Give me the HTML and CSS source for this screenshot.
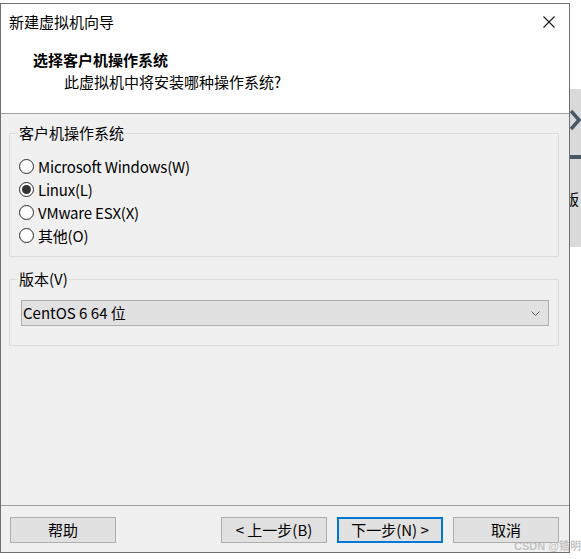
FILE: index.html
```html
<!DOCTYPE html>
<html lang="zh-CN">
<head>
<meta charset="utf-8">
<title>新建虚拟机向导</title>
<link rel="stylesheet" href="styles.css">
</head>
<body>
<div class="desktop">
  <div class="bgwin">
    <svg class="bg-arrow" width="12" height="24" viewBox="0 0 12 24"><polyline points="1,3 9,12 1,21" fill="none" stroke="#4a5866" stroke-width="3.5"/></svg>
    <div class="bg-bar"></div>
    <div class="bg-char">版</div>
  </div>

  <div class="dialog">
    <div class="titlebar">
      <span class="title">新建虚拟机向导</span>
      <svg class="close" width="12" height="12" viewBox="0 0 12 12"><path d="M0.5 0.5 L11.5 11.5 M11.5 0.5 L0.5 11.5" stroke="#1a1a1a" stroke-width="1.1" fill="none"/></svg>
    </div>
    <div class="header">
      <div class="heading">选择客户机操作系统</div>
      <div class="subheading">此虚拟机中将安装哪种操作系统?</div>
    </div>
    <div class="content">
      <fieldset class="group group-os">
        <legend>客户机操作系统</legend>
        <div class="radio-row"><span class="radio"></span><span>Microsoft Windows(W)</span></div>
        <div class="radio-row"><span class="radio checked"></span><span>Linux(L)</span></div>
        <div class="radio-row"><span class="radio"></span><span>VMware ESX(X)</span></div>
        <div class="radio-row"><span class="radio"></span><span>其他(O)</span></div>
      </fieldset>
      <fieldset class="group group-ver">
        <legend>版本(V)</legend>
        <div class="combo">
          <span>CentOS 6 64 位</span>
          <svg class="chev" width="9" height="5" viewBox="0 0 9 5"><polyline points="0.5,0.5 4.5,4.5 8.5,0.5" fill="none" stroke="#606060" stroke-width="1"/></svg>
        </div>
      </fieldset>
    </div>
    <div class="footer">
      <div class="btn">帮助</div>
      <div class="btn-group">
        <div class="btn">&lt; 上一步(B)</div>
        <div class="btn default">下一步(N) &gt;</div>
        <div class="btn">取消</div>
      </div>
    </div>
  </div>

  <div class="watermark">CSDN @锆明</div>
</div>
</body>
</html>
```

FILE: styles.css
```css
* { box-sizing: border-box; }
html, body {
  margin: 0;
  padding: 0;
  background: #ffffff;
}
body {
  font-family: "Noto Sans CJK SC", "Noto Sans", sans-serif;
  font-size: 15px;
  color: #000;
}
.desktop {
  position: relative;
  width: 581px;
  height: 559px;
  overflow: hidden;
  background: #ffffff;
}
.bgwin {
  position: absolute;
  left: 565px;
  top: 89px;
  width: 20px;
  height: 158px;
  background: #dadada;
}
.bg-arrow {
  position: absolute;
  left: 5px;
  top: 19px;
}
.bg-bar {
  position: absolute;
  left: 5px;
  top: 66px;
  width: 11px;
  height: 4px;
  background: #4a5866;
}
.bg-char {
  position: absolute;
  left: -1px;
  top: 100px;
  font-size: 15px;
  line-height: 20px;
}
.dialog {
  position: absolute;
  left: 0;
  top: 3px;
  width: 570px;
  height: 550px;
  border: 1px solid #707070;
  background: #f0f0f0;
  display: flex;
  flex-direction: column;
  z-index: 2;
}
.titlebar {
  height: 36px;
  background: #fff;
  display: flex;
  align-items: center;
  justify-content: space-between;
  padding: 0 14px 0 8px;
  line-height: 20px;
}
.header {
  height: 74px;
  background: #fff;
  border-bottom: 1px solid #a0a0a0;
  padding-top: 10px;
}
.heading {
  font-weight: bold;
  line-height: 20px;
  padding-left: 32px;
}
.subheading {
  line-height: 20px;
  margin-top: 2px;
  padding-left: 63px;
}
.content {
  flex: 1;
  padding: 9px 0 0 8px;
}
.group {
  margin: 0;
  width: 550px;
  border: 1px solid #dcdcdc;
  padding: 12px 8px 9px 8px;
  min-width: 0;
}
.group legend {
  padding: 0 1px;
  line-height: 20px;
}
.group-ver {
  margin-top: 12px;
  padding: 11px 8px 19px 8px;
}
.radio-row {
  display: flex;
  align-items: center;
  height: 23px;
  line-height: 20px;
  letter-spacing: -0.2px;
}
.radio {
  width: 15px;
  height: 15px;
  border: 1.3px solid #2b2b2b;
  border-radius: 50%;
  background: #fff;
  margin: 0 4px 0 1px;
  display: flex;
  align-items: center;
  justify-content: center;
  flex: none;
}
.radio.checked::after {
  content: "";
  width: 9px;
  height: 9px;
  border-radius: 50%;
  background: #333;
}
.combo {
  margin-left: 3px;
  width: 528px;
  height: 26px;
  background: #e1e1e1;
  border: 1px solid #adadad;
  display: flex;
  align-items: center;
  justify-content: space-between;
  padding: 0 8px 0 1px;
  line-height: 20px;
}
.footer {
  height: 47px;
  border-top: 1px solid #a0a0a0;
  display: flex;
  justify-content: space-between;
  padding: 11px 10px 0 9px;
}
.btn-group {
  display: flex;
  gap: 10px;
}
.btn {
  width: 106px;
  height: 26px;
  background: #e1e1e1;
  border: 1px solid #adadad;
  display: flex;
  align-items: center;
  justify-content: center;
  line-height: 20px;
}
.btn.default {
  border: 2px solid #0078d7;
}
.watermark {
  position: absolute;
  left: 514px;
  top: 539px;
  font-family: "Liberation Sans", "Noto Sans CJK SC", sans-serif;
  font-size: 11px;
  line-height: 14px;
  font-weight: bold;
  color: rgba(175, 175, 175, 0.7);
  white-space: nowrap;
  z-index: 3;
}
```
